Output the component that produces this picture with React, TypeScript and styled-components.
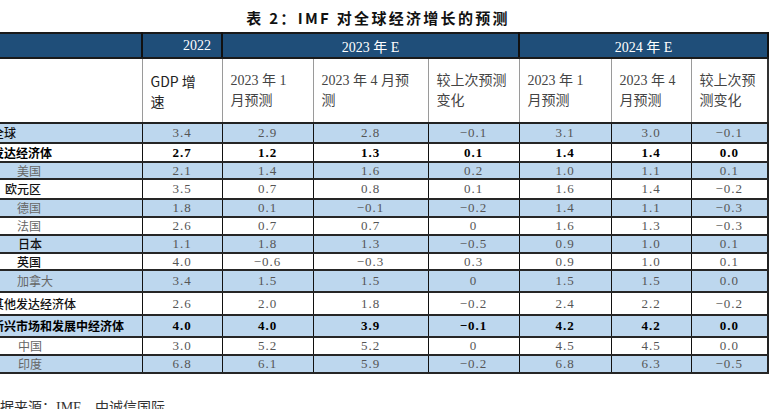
import React from 'react';
import styled, { createGlobalStyle, css } from 'styled-components';

const GlobalStyle = createGlobalStyle`
  html, body {
    margin: 0;
    padding: 0;
    background: #ffffff;
  }
  body {
    font-family: 'Liberation Serif', 'Noto Sans CJK SC', serif;
    overflow: hidden;
  }
`;

// whole sheet, cropped like the screenshot
const Page = styled.div`
  width: 782px;
  height: 409px;
  overflow: hidden;
  background: #fff;
`;

const Title = styled.h3`
  margin: 0;
  padding: 8px 0 4px 0;
  width: 780px;
  margin-left: -12px;
  text-align: center;
  font-family: 'Noto Sans CJK SC', sans-serif;
  font-weight: 700;
  font-size: 15px;
  line-height: 20px;
  letter-spacing: 2.3px;
  color: #111;
`;

const TableWrap = styled.div`
  width: 780px;
  margin-left: -12px;
`;

const Table = styled.table`
  width: 780px;
  table-layout: fixed;
  border-collapse: collapse;
  border-spacing: 0;
`;

const YearRow = styled.tr`
  height: 25px;
  background: #1f4e79;
`;

const YearCell = styled.th<{ $align?: 'left' | 'center' | 'right' }>`
  padding: 0 10px;
  text-align: ${p => p.$align || 'center'};
  font-family: 'Liberation Serif', 'Noto Sans CJK SC', serif;
  font-weight: 400;
  font-size: 14px;
  color: #ffffff;
  border-top: 2px solid #1a1a1a;
  border-bottom: 2px solid #1a1a1a;
  border-left: 2px solid #111;
  border-right: 2px solid #111;

  &:first-child {
    border-left: none;
  }
`;

const SubHeadRow = styled.tr`
  height: 65px;
  background: #fff;
`;

const SubHead = styled.th<{ $sans?: boolean }>`
  padding: 0 6px 0 8px;
  text-align: left;
  vertical-align: middle;
  font-weight: 400;
  font-size: 14px;
  line-height: 20px;
  color: ${p => (p.$sans ? '#222' : '#444')};
  font-family: ${p =>
    p.$sans ? "'Noto Sans CJK SC', sans-serif" : "'Liberation Serif', 'Noto Sans CJK SC', serif"};
  border-left: 1px solid #9a9a9a;
  border-right: 1px solid #9a9a9a;
  border-bottom: 2px solid #222;

  &:first-child {
    border-left: none;
  }
  &:last-child {
    border-right: 2px solid #333;
  }
`;

const DataRow = styled.tr<{ $shade: boolean; $h: number }>`
  height: ${p => p.$h}px;
  background: ${p => (p.$shade ? '#bdd7ee' : '#ffffff')};
`;

const LabelCell = styled.td<{ $indent: number; $tone: 'strong' | 'dark' | 'muted' }>`
  padding: 0 0 0 ${p => 4 + p.$indent}px;
  font-family: 'Noto Sans CJK SC', sans-serif;
  font-size: 12px;
  line-height: 14px;
  white-space: nowrap;
  overflow: hidden;
  border-top: 2px solid #262626;
  border-bottom: 2px solid #262626;
  border-right: 1px solid #111;
  ${p =>
    p.$tone === 'strong' &&
    css`
      color: #000;
      font-weight: 700;
    `}
  ${p =>
    p.$tone === 'dark' &&
    css`
      color: #111;
      font-weight: 500;
    `}
  ${p =>
    p.$tone === 'muted' &&
    css`
      color: #666;
      font-weight: 400;
    `}
`;

const NumCell = styled.td<{ $bold: boolean }>`
  padding: 0;
  text-align: center;
  font-family: 'Liberation Serif', serif;
  font-size: 13px;
  line-height: 14px;
  letter-spacing: 1px;
  color: ${p => (p.$bold ? '#000' : '#555')};
  font-weight: ${p => (p.$bold ? 700 : 400)};
  border-top: 2px solid #262626;
  border-bottom: 2px solid #262626;
  border-left: 1px solid #111;
  border-right: 1px solid #111;

  &:last-child {
    border-right: 2px solid #222;
  }
`;

const Source = styled.div`
  margin: 25px 0 0 -14px;
  font-family: 'Liberation Serif', 'Noto Sans CJK SC', serif;
  font-size: 14px;
  line-height: 18px;
  color: #333;
  white-space: nowrap;
`;

type Row = {
  label: string;
  indent: number;
  tone: 'strong' | 'dark' | 'muted';
  bold: boolean;
  shade: boolean;
  h: number;
  vals: string[];
};

const rows: Row[] = [
  { label: '全球', indent: 0, tone: 'dark', bold: false, shade: true, h: 20, vals: ['3.4', '2.9', '2.8', '−0.1', '3.1', '3.0', '−0.1'] },
  { label: '发达经济体', indent: 0, tone: 'strong', bold: true, shade: false, h: 19, vals: ['2.7', '1.2', '1.3', '0.1', '1.4', '1.4', '0.0'] },
  { label: '美国', indent: 25, tone: 'muted', bold: false, shade: true, h: 17, vals: ['2.1', '1.4', '1.6', '0.2', '1.0', '1.1', '0.1'] },
  { label: '欧元区', indent: 13, tone: 'dark', bold: false, shade: false, h: 20, vals: ['3.5', '0.7', '0.8', '0.1', '1.6', '1.4', '−0.2'] },
  { label: '德国', indent: 25, tone: 'muted', bold: false, shade: true, h: 18, vals: ['1.8', '0.1', '−0.1', '−0.2', '1.4', '1.1', '−0.3'] },
  { label: '法国', indent: 25, tone: 'muted', bold: false, shade: false, h: 18, vals: ['2.6', '0.7', '0.7', '0', '1.6', '1.3', '−0.3'] },
  { label: '日本', indent: 26, tone: 'dark', bold: false, shade: true, h: 18, vals: ['1.1', '1.8', '1.3', '−0.5', '0.9', '1.0', '0.1'] },
  { label: '英国', indent: 25, tone: 'dark', bold: false, shade: false, h: 17, vals: ['4.0', '−0.6', '−0.3', '0.3', '0.9', '1.0', '0.1'] },
  { label: '加拿大', indent: 25, tone: 'muted', bold: false, shade: true, h: 22, vals: ['3.4', '1.5', '1.5', '0', '1.5', '1.5', '0.0'] },
  { label: '其他发达经济体', indent: 0, tone: 'dark', bold: false, shade: false, h: 23, vals: ['2.6', '2.0', '1.8', '−0.2', '2.4', '2.2', '−0.2'] },
  { label: '新兴市场和发展中经济体', indent: 0, tone: 'strong', bold: true, shade: true, h: 22, vals: ['4.0', '4.0', '3.9', '−0.1', '4.2', '4.2', '0.0'] },
  { label: '中国', indent: 26, tone: 'muted', bold: false, shade: false, h: 18, vals: ['3.0', '5.2', '5.2', '0', '4.5', '4.5', '0.0'] },
  { label: '印度', indent: 26, tone: 'muted', bold: false, shade: true, h: 18, vals: ['6.8', '6.1', '5.9', '−0.2', '6.8', '6.3', '−0.5'] },
];

const colWidths = [154, 80, 91, 115, 91, 92, 80, 77];

// sub-header lines are broken where the source document breaks them
const subHeads: { lines: string[]; sans?: boolean }[] = [
  { lines: ['GDP 增', '速'], sans: true },
  { lines: ['2023 年 1', '月预测'] },
  { lines: ['2023 年 4 月预', '测'] },
  { lines: ['较上次预测', '变化'] },
  { lines: ['2023 年 1', '月预测'] },
  { lines: ['2023 年 4', '月预测'] },
  { lines: ['较上次预', '测变化'] },
];

export default function App() {
  return (
    <>
      <GlobalStyle />
      <Page>
        <Title>表 2：IMF 对全球经济增长的预测</Title>
        <TableWrap>
          <Table>
            <colgroup>
              {colWidths.map((w, i) => (
                <col key={i} style={{ width: w }} />
              ))}
            </colgroup>
            <thead>
              <YearRow>
                <YearCell />
                <YearCell $align="right">2022</YearCell>
                <YearCell colSpan={3}>2023 年 E</YearCell>
                <YearCell colSpan={3}>2024 年 E</YearCell>
              </YearRow>
              <SubHeadRow>
                <SubHead />
                {subHeads.map((s, i) => (
                  <SubHead key={i} $sans={s.sans}>
                    {s.lines.map((l, j) => (
                      <React.Fragment key={j}>
                        {j > 0 && <br />}
                        {l}
                      </React.Fragment>
                    ))}
                  </SubHead>
                ))}
              </SubHeadRow>
            </thead>
            <tbody>
              {rows.map(r => (
                <DataRow key={r.label} $shade={r.shade} $h={r.h}>
                  <LabelCell $indent={r.indent} $tone={r.tone}>
                    {r.label}
                  </LabelCell>
                  {r.vals.map((v, i) => (
                    <NumCell key={i} $bold={r.bold}>
                      {v}
                    </NumCell>
                  ))}
                </DataRow>
              ))}
            </tbody>
          </Table>
        </TableWrap>
        <Source>数据来源：IMF，中诚信国际</Source>
      </Page>
    </>
  );
}
